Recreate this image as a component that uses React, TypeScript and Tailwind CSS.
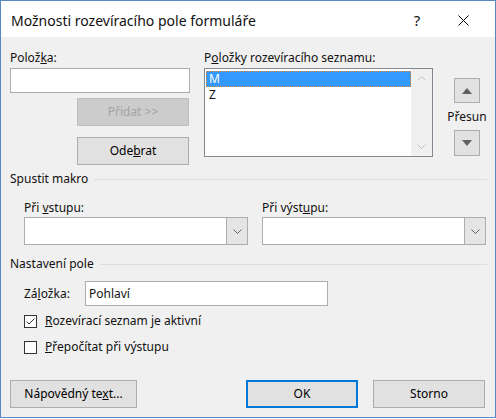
import React from 'react';

const font = { fontFamily: '"Noto Sans", "Open Sans", sans-serif' };

const Btn = ({ children, className = '', disabled = false, primary = false }: { children: React.ReactNode; className?: string; disabled?: boolean; primary?: boolean }) => (
  <div
    className={`flex items-center justify-center h-[28px] text-[12px] ${
      disabled
        ? 'bg-[#cccccc] border border-[#bfbfbf] text-[#a3a3a3]'
        : primary
        ? 'bg-[#e1e1e1] border-2 border-[#0078d7] text-black'
        : 'bg-[#e1e1e1] border border-[#adadad] text-black'
    } ${className}`}
  >
    {children}
  </div>
);

const Chevron = ({ up = false, color = '#8a8a8a' }: { up?: boolean; color?: string }) => (
  <svg width="9" height="5" viewBox="0 0 9 5">
    <path d={up ? 'M0.5 4.5 L4.5 0.5 L8.5 4.5' : 'M0.5 0.5 L4.5 4.5 L8.5 0.5'} fill="none" stroke={color} strokeWidth="1" />
  </svg>
);

const Combo = () => (
  <div className="flex h-[28px] w-[224px] border border-[#adadad] bg-white">
    <div className="flex-1" />
    <div className="w-[21px] flex items-center justify-center bg-[#e5e5e5] border-l border-[#adadad]">
      <Chevron color="#606060" />
    </div>
  </div>
);

const GroupHeader = ({ title }: { title: string }) => (
  <div className="flex items-center h-[16px]">
    <span className="pr-[6px]">{title}</span>
    <div className="flex-1 h-px bg-[#dcdcdc]" />
  </div>
);

const Check = ({ checked }: { checked: boolean }) => (
  <div className="w-[13px] h-[13px] border border-[#333333] bg-white flex items-center justify-center">
    {checked && (
      <svg width="11" height="11" viewBox="0 0 11 11">
        <path d="M1.5 5.5 L4 8 L9.5 2.5" fill="none" stroke="#333333" strokeWidth="1" />
      </svg>
    )}
  </div>
);

export default function App() {
  return (
    <div className="w-[496px] h-[419px] bg-white">
      <div className="w-[496px] h-[418px] border border-[#5a88c7] flex flex-col text-[12px] text-[#111111]" style={font}>
        {/* Title bar */}
        <div className="h-[36px] bg-white flex items-center shrink-0 pt-[2px]">
          <div className="pl-[10px] text-[14px] flex-1">Možnosti rozevíracího pole formuláře</div>
          <div className="w-[46px] text-center text-[15px]">?</div>
          <div className="w-[46px] flex items-center justify-center mr-[9px]">
            <svg width="11" height="11" viewBox="0 0 11 11">
              <path d="M0.5 0.5 L10.5 10.5 M10.5 0.5 L0.5 10.5" stroke="#000" strokeWidth="1" />
            </svg>
          </div>
        </div>

        {/* Body */}
        <div className="flex-1 bg-[#f0f0f0] pl-[9px] pr-[8px] pt-[12px]">
          <div className="flex">
            <div className="w-[180px]">
              <div className="h-[16px]">
                Polož<u>k</u>a:
              </div>
              <div className="mt-[3px] h-[25px] border border-[#abadb3] bg-white" />
              <Btn disabled className="ml-[67px] w-[112px] mt-[5px]">Přidat &gt;&gt;</Btn>
              <Btn className="ml-[67px] w-[112px] mt-[11px]">
                <span>
                  Ode<u>b</u>rat
                </span>
              </Btn>
            </div>
            <div className="ml-[14px] w-[229px]">
              <div className="h-[16px]">
                P<u>o</u>ložky rozevíracího seznamu:
              </div>
              <div className="mt-[3px] h-[89px] border border-[#828790] bg-white flex">
                <div className="flex-1 pt-[2px] pl-[1px]">
                  <div className="h-[16px] bg-[#3399ff] text-white border border-dotted border-[#e5883a] flex items-center pl-[2px]">M</div>
                  <div className="h-[16px] flex items-center pl-[3px]">Z</div>
                </div>
                <div className="w-[21px] bg-[#f0f0f0] flex flex-col justify-between items-center py-[7px]">
                  <Chevron up color="#c2c2c2" />
                  <Chevron color="#c2c2c2" />
                </div>
              </div>
            </div>
            <div className="ml-[14px] w-[40px] flex flex-col items-center pt-[29px]">
              <div className="w-[26px] h-[25px] bg-[#e1e1e1] border border-[#adadad] flex items-center justify-center">
                <svg width="10" height="6" viewBox="0 0 10 6">
                  <path d="M0 6 L5 0 L10 6 Z" fill="#606060" />
                </svg>
              </div>
              <div className="h-[27px] flex items-center">Přesun</div>
              <div className="w-[26px] h-[26px] bg-[#e1e1e1] border border-[#adadad] flex items-center justify-center">
                <svg width="10" height="6" viewBox="0 0 10 6">
                  <path d="M0 0 L5 6 L10 0 Z" fill="#606060" />
                </svg>
              </div>
            </div>
          </div>

          <div className="mt-[6px]">
            <GroupHeader title="Spustit makro" />
          </div>
          <div className="flex ml-[14px] mt-[12px] gap-[14px]">
            <div>
              <div className="h-[16px]">
                Při <u>v</u>stupu:
              </div>
              <div className="mt-[2px]">
                <Combo />
              </div>
            </div>
            <div>
              <div className="h-[16px]">
                Při výst<u>u</u>pu:
              </div>
              <div className="mt-[2px]">
                <Combo />
              </div>
            </div>
          </div>

          <div className="mt-[11px]">
            <GroupHeader title="Nastavení pole" />
          </div>
          <div className="ml-[14px] mt-[9px] flex items-center">
            <div className="w-[61px]">
              Zá<u>l</u>ožka:
            </div>
            <div className="w-[243px] h-[25px] border border-[#abadb3] bg-white flex items-center pl-[3px]">Pohlaví</div>
          </div>
          <div className="ml-[14px] mt-[8px] flex items-center gap-[8px] h-[14px]">
            <Check checked />
            <span>
              <u>R</u>ozevírací seznam je aktivní
            </span>
          </div>
          <div className="ml-[14px] mt-[12px] flex items-center gap-[8px] h-[14px]">
            <Check checked={false} />
            <span>
              <u>P</u>řepočítat při výstupu
            </span>
          </div>

          <div className="mt-[26px] flex">
            <Btn className="w-[127px]">
              <span>
                Nápovědný te<u>x</u>t...
              </span>
            </Btn>
            <Btn primary className="w-[112px] ml-[109px]">OK</Btn>
            <Btn className="w-[112px] ml-[15px]">Storno</Btn>
          </div>
        </div>
      </div>
    </div>
  );
}
